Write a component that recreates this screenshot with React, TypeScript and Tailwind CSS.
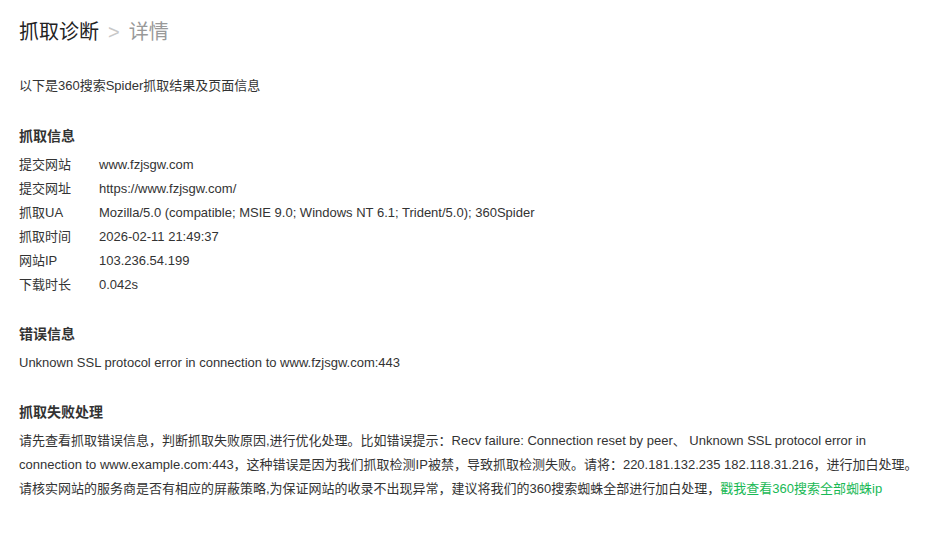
const rows: [string, string][] = [
  ["提交网站", "www.fzjsgw.com"],
  ["提交网址", "https://www.fzjsgw.com/"],
  ["抓取UA", "Mozilla/5.0 (compatible; MSIE 9.0; Windows NT 6.1; Trident/5.0); 360Spider"],
  ["抓取时间", "2026-02-11 21:49:37"],
  ["网站IP", "103.236.54.199"],
  ["下载时长", "0.042s"],
];

const font = { fontFamily: '"Liberation Sans", Arial, "Noto Sans CJK SC", sans-serif' };

const Section = ({ title, children }: { title: string; children: React.ReactNode }) => (
  <section className="mt-[25px]">
    <h3 className="text-[14px] leading-6 font-bold text-[#333]">{title}</h3>
    <div className="mt-[5px]">{children}</div>
  </section>
);

export default function App() {
  return (
    <div className="min-h-[558px] bg-white pl-[19px] pr-[20px] pt-[17px] text-[13px] text-[#333]" style={font}>
      <h2 className="text-[20px] leading-[30px] text-[#222]">
        抓取诊断<span className="mx-[9px] text-[#c8c8c8]">&gt;</span>
        <span className="text-[#999]">详情</span>
      </h2>

      <p className="mt-[27px] pb-px leading-6">以下是360搜索Spider抓取结果及页面信息</p>

      <Section title="抓取信息">
        {rows.map(([label, value]) => (
          <div key={label} className="flex leading-6">
            <span className="w-[80px] shrink-0">{label}</span>
            <span>{value}</span>
          </div>
        ))}
      </Section>

      <Section title="错误信息">
        <p className="leading-6">Unknown SSL protocol error in connection to www.fzjsgw.com:443</p>
      </Section>

      <Section title="抓取失败处理">
        <p className="leading-6">
          请先查看抓取错误信息，判断抓取失败原因,进行优化处理。比如错误提示：Recv failure: Connection reset by peer、 Unknown SSL protocol error in connection to www.example.com:443，这种错误是因为我们抓取检测IP被禁，导致抓取检测失败。请将：220.181.132.235 182.118.31.216，进行加白处理。请核实网站的服务商是否有相应的屏蔽策略,为保证网站的收录不出现异常，建议将我们的360搜索蜘蛛全部进行加白处理，
          <a href="#" className="text-[#19b955]">戳我查看360搜索全部蜘蛛ip</a>
        </p>
      </Section>
    </div>
  );
}
